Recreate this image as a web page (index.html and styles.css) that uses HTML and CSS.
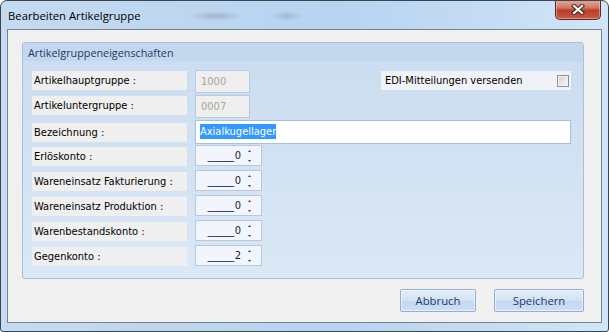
FILE: index.html
```html
<!DOCTYPE html>
<html lang="de">
<head>
    <meta charset="UTF-8">
    <title>Bearbeiten Artikelgruppe</title>
    <link rel="stylesheet" href="styles.css">
</head>
<body>

<div class="window">
    <div class="titlebar">
        <span class="title">Bearbeiten Artikelgruppe</span>
        <button class="close">
            <svg width="14" height="11" viewBox="0 0 14 11">
                <path d="M3 2 L11 9 M11 2 L3 9" stroke="#3a2420" stroke-width="4.2" stroke-linecap="square"/>
                <path d="M3 2 L11 9 M11 2 L3 9" stroke="#fff" stroke-width="2.2" stroke-linecap="square"/>
            </svg>
        </button>
    </div>

    <div class="client">
        <div class="group">
            <div class="group-head">Artikelgruppeneigenschaften</div>
            <div class="group-body">
                <div class="row">
                    <span class="label">Artikelhauptgruppe :</span>
                    <span class="field readonly">1000</span>
                    <span class="edi">
                        <span>EDI-Mitteilungen versenden</span>
                        <span class="check"></span>
                    </span>
                </div>
                <div class="row">
                    <span class="label">Artikeluntergruppe :</span>
                    <span class="field readonly">0007</span>
                </div>
                <div class="row">
                    <span class="label label-low">Bezeichnung :</span>
                    <span class="field textbox"><span class="selected">Axialkugellager</span></span>
                </div>
                <div class="row">
                    <span class="label label-mid">Erlöskonto :</span>
                    <span class="spin"><span class="num"><span class="pad">______</span>0</span><span class="arrows"><svg width="5" height="14" viewBox="0 0 5 14"><path d="M2.5 1 L4 3 L1 3 Z M1 11 L4 11 L2.5 13 Z" fill="#2c4670"/></svg></span></span>
                </div>
                <div class="row">
                    <span class="label label-mid">Wareneinsatz Fakturierung :</span>
                    <span class="spin"><span class="num"><span class="pad">______</span>0</span><span class="arrows"><svg width="5" height="14" viewBox="0 0 5 14"><path d="M2.5 1 L4 3 L1 3 Z M1 11 L4 11 L2.5 13 Z" fill="#2c4670"/></svg></span></span>
                </div>
                <div class="row">
                    <span class="label label-mid">Wareneinsatz Produktion :</span>
                    <span class="spin"><span class="num"><span class="pad">______</span>0</span><span class="arrows"><svg width="5" height="14" viewBox="0 0 5 14"><path d="M2.5 1 L4 3 L1 3 Z M1 11 L4 11 L2.5 13 Z" fill="#2c4670"/></svg></span></span>
                </div>
                <div class="row">
                    <span class="label label-mid">Warenbestandskonto :</span>
                    <span class="spin"><span class="num"><span class="pad">______</span>0</span><span class="arrows"><svg width="5" height="14" viewBox="0 0 5 14"><path d="M2.5 1 L4 3 L1 3 Z M1 11 L4 11 L2.5 13 Z" fill="#2c4670"/></svg></span></span>
                </div>
                <div class="row">
                    <span class="label label-mid">Gegenkonto :</span>
                    <span class="spin"><span class="num"><span class="pad">______</span>2</span><span class="arrows"><svg width="5" height="14" viewBox="0 0 5 14"><path d="M2.5 1 L4 3 L1 3 Z M1 11 L4 11 L2.5 13 Z" fill="#2c4670"/></svg></span></span>
                </div>
            </div>
        </div>

        <div class="footer">
            <button class="btn btn-abbruch">Abbruch</button>
            <button class="btn btn-speichern">Speichern</button>
        </div>
    </div>
</div>

</body>
</html>
```

FILE: styles.css
```css
body {
    margin: 0;
    font-family: "DejaVu Sans Condensed", "Liberation Sans", sans-serif;
    font-size: 11px;
    color: #000;
    background: #fff;
}

.window {
    width: 609px;
    height: 332px;
    box-sizing: border-box;
    border: 1px solid #3c444e;
    border-radius: 7px 7px 3px 3px;
    padding: 0 6px 8px 6px;
    display: flex;
    flex-direction: column;
    background:
        radial-gradient(ellipse 28px 5px at 215px 15px, rgba(110, 125, 140, 0.35), transparent),
        radial-gradient(ellipse 16px 5px at 286px 15px, rgba(110, 125, 140, 0.3), transparent),
        linear-gradient(to right, #c4dbf1, #b6d3f0 55%, #d0e5f8);
    overflow: hidden;
}

.titlebar {
    height: 28px;
    display: flex;
    justify-content: space-between;
    align-items: flex-start;
}

.title {
    font-family: "Open Sans", sans-serif;
    font-size: 11.3px;
    line-height: 30px;
    margin-left: 1px;
    color: #000;
}

.close {
    width: 46px;
    height: 20px;
    margin: -1px 1px 0 0;
    padding: 0;
    border: 1px solid #5a2a22;
    border-top: none;
    border-radius: 0 0 5px 5px;
    background: linear-gradient(#e7a899, #d27865 40%, #b93f2b 55%, #c65a42);
    display: flex;
    align-items: center;
    justify-content: center;
    box-shadow: inset 0 0 0 1px rgba(255, 220, 210, 0.45);
}

.client {
    flex: 1;
    background: #f0f0f0;
    border: 1px solid #76828f;
    padding: 12px 17px 0 14px;
    display: flex;
    flex-direction: column;
}

.group {
    height: 237px;
    box-sizing: border-box;
    border: 1px solid #aac0d8;
    border-radius: 3px;
    overflow: hidden;
    background: linear-gradient(#cadcf0, #dbe8f5);
}

.group-head {
    height: 18px;
    line-height: 19px;
    padding-left: 5px;
    background: #c3d8ee;
    font-family: "Open Sans", sans-serif;
    font-size: 10.8px;
    color: #1f3a5f;
}

.group-body {
    padding: 9px 12px 8px 9px;
}

.row {
    height: 25px;
    display: flex;
    align-items: flex-start;
    gap: 8px;
}

.label {
    width: 155px;
    height: 19px;
    box-sizing: border-box;
    margin-top: 1px;
    padding-left: 2px;
    line-height: 19px;
    background: #efefef;
    white-space: nowrap;
}

.label-low {
    margin-top: 3px;
}

.label-mid {
    margin-top: 2px;
}

.field {
    height: 23px;
    box-sizing: border-box;
    border: 1px solid #b7cbe3;
    line-height: 21px;
}

.readonly {
    width: 55px;
    padding-left: 5px;
    background: #efefef;
    color: #aaa396;
}

.textbox {
    flex: 1;
    height: 24px;
    line-height: 22px;
    padding-left: 4px;
    background: #fff;
    border-color: #a9c0dc;
}

.selected {
    background: #3399ff;
    color: #fff;
    padding: 1px 0;
}

.spin {
    width: 67px;
    height: 21px;
    box-sizing: border-box;
    border: 1px solid #b4c8e2;
    background: #f2f6fc;
    display: flex;
    align-items: center;
    justify-content: flex-end;
}

.num {
    color: #14213a;
    padding-right: 6px;
}

.pad {
    letter-spacing: -0.6px;
    margin-right: 1px;
}

.arrows {
    width: 14px;
    height: 19px;
    display: flex;
    align-items: center;
}

.edi {
    margin-left: auto;
    width: 190px;
    height: 19px;
    box-sizing: border-box;
    margin-top: 1px;
    padding: 0 2px 0 4px;
    background: #eff2f6;
    display: flex;
    align-items: center;
    justify-content: space-between;
    white-space: nowrap;
}

.check {
    width: 12px;
    height: 12px;
    box-sizing: border-box;
    border: 1px solid #8e9193;
    background: linear-gradient(135deg, #d2d4d6, #f6f6f6);
    box-shadow: inset 0 0 0 1px #f3f3f3;
}

.footer {
    margin-top: 10px;
    display: flex;
    justify-content: flex-end;
    gap: 18px;
}

.btn {
    height: 23px;
    padding: 0;
    border: 1px solid #8eafd8;
    border-radius: 2px;
    background: linear-gradient(#e3edf8, #d3e2f3 50%, #c3d7ef 52%, #cddff2);
    box-shadow: inset 0 0 0 1px rgba(255, 255, 255, 0.55);
    font-family: "Open Sans", sans-serif;
    font-size: 11.3px;
    color: #1d3b70;
}

.btn-abbruch {
    width: 76px;
}

.btn-speichern {
    width: 90px;
}
```
